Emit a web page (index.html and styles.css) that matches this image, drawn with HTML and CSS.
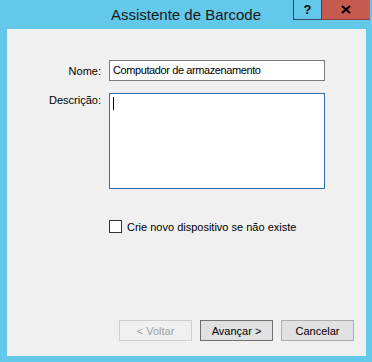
FILE: index.html
```html
<!DOCTYPE html>
<html lang="pt">
<head>
    <meta charset="UTF-8">
    <meta name="viewport" content="width=device-width, initial-scale=1.0">
    <title>Assistente de Barcode</title>
    <link rel="stylesheet" href="styles.css">
</head>
<body>
    <div class="window">
        <div class="title-bar">
            <span></span>
            <span class="title">Assistente de Barcode</span>
            <div class="caption-buttons">
                <div class="cap-btn help-btn">?</div>
                <div class="cap-btn close-btn">
                    <svg width="10" height="9" viewBox="0 0 10 9">
                        <path d="M1 1 L9 8 M9 1 L1 8" stroke="#000" stroke-width="2.2"/>
                    </svg>
                </div>
            </div>
        </div>

        <div class="client">
            <div class="form-row">
                <label class="field-label">Nome:</label>
                <div class="textbox">Computador de armazenamento</div>
            </div>
            <div class="form-row desc-row">
                <label class="field-label">Descrição:</label>
                <div class="textarea"><span class="caret"></span></div>
            </div>
            <div class="check-row">
                <span class="checkbox"></span>
                <span>Crie novo dispositivo se não existe</span>
            </div>

            <div class="button-row">
                <button class="btn" disabled>&lt; Voltar</button>
                <button class="btn btn-default">Avançar &gt;</button>
                <button class="btn">Cancelar</button>
            </div>
        </div>
    </div>
</body>
</html>
```

FILE: styles.css
```css
html, body {
    margin: 0;
    padding: 0;
}

body {
    width: 372px;
    height: 362px;
    background: #63c8ea;
    font-family: "Liberation Sans", Arial, sans-serif;
    font-size: 11px;
    color: #000;
    overflow: hidden;
}

.window {
    display: flex;
    flex-direction: column;
    height: 362px;
}

/* caption */
.title-bar {
    display: grid;
    grid-template-columns: 1fr auto 1fr;
    height: 29px;
}

.title {
    font-size: 15px;
    color: #1a1a1a;
    line-height: 28px;
    padding-top: 1px;
}

.caption-buttons {
    display: flex;
    justify-content: flex-end;
    align-items: flex-start;
    padding-right: 2px;
}

.cap-btn {
    height: 20px;
    display: flex;
    align-items: center;
    justify-content: center;
    box-sizing: border-box;
}

.help-btn {
    width: 29px;
    border: 1px solid #2a4c5e;
    border-top: none;
    font-weight: bold;
    font-size: 13px;
}

.close-btn {
    width: 48px;
    background: #c75a4f;
    border-bottom: 1px solid #8f3d36;
}

/* dialog body */
.client {
    margin: 0 6px 0 7px;
    height: 327px;
    background: #f0f0f0;
    box-sizing: border-box;
    padding: 31px 12px 15px 0;
    display: flex;
    flex-direction: column;
}

.form-row {
    display: flex;
    align-items: center;
    gap: 8px;
}

.field-label {
    width: 94px;
    text-align: right;
    color: #000;
}

.textbox {
    width: 216px;
    height: 21px;
    box-sizing: border-box;
    border: 1px solid #7a7a7a;
    background: #fff;
    padding: 0 0 0 3px;
    line-height: 19px;
    letter-spacing: -0.4px;
}

.desc-row {
    margin-top: 12px;
    align-items: flex-start;
}

.desc-row .field-label {
    padding-top: 1px;
}

.textarea {
    width: 216px;
    height: 96px;
    box-sizing: border-box;
    border: 1px solid #2f6fa7;
    background: #fff;
    padding: 3px 0 0 3px;
}

.caret {
    display: block;
    width: 1px;
    height: 13px;
    background: #000;
}

.check-row {
    display: flex;
    align-items: center;
    gap: 5px;
    margin: 31px 0 0 102px;
}

.checkbox {
    width: 13px;
    height: 13px;
    box-sizing: border-box;
    border: 1px solid #333;
    background: #fff;
}

.button-row {
    margin-top: auto;
    display: flex;
    justify-content: flex-end;
    gap: 8px;
}

.btn {
    width: 73px;
    height: 21px;
    box-sizing: border-box;
    border: 1px solid #adadad;
    background: #e1e1e1;
    font-family: "Liberation Sans", Arial, sans-serif;
    font-size: 11px;
    color: #000;
    padding: 0;
}

.btn:disabled {
    border-color: #cfcfcf;
    background: #f0f0f0;
    color: #a0a0a0;
}

.btn-default {
    border-color: #707070;
}
```
